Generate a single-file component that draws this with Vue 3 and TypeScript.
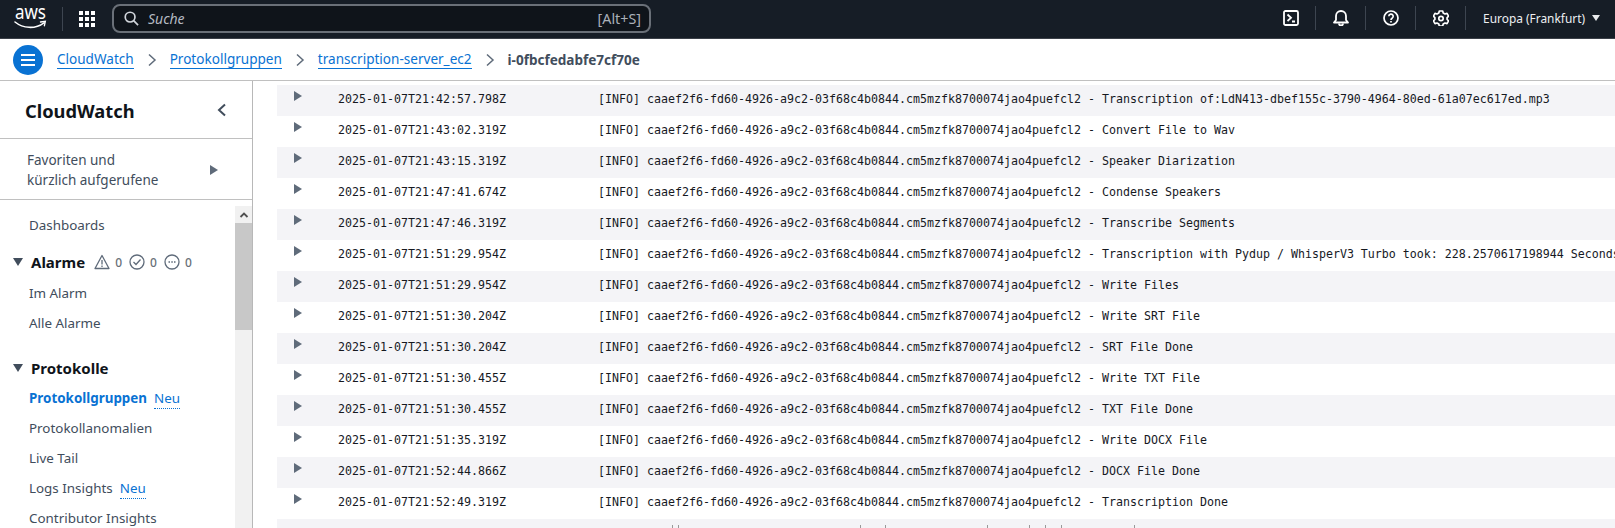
<script setup lang="ts">
const prefix = 'caaef2f6-fd60-4926-a9c2-03f68c4b0844.cm5mzfk8700074jao4puefcl2 - '
const rows: [string, string][] = [
  ['2025-01-07T21:42:57.798Z', 'Transcription of:LdN413-dbef155c-3790-4964-80ed-61a07ec617ed.mp3'],
  ['2025-01-07T21:43:02.319Z', 'Convert File to Wav'],
  ['2025-01-07T21:43:15.319Z', 'Speaker Diarization'],
  ['2025-01-07T21:47:41.674Z', 'Condense Speakers'],
  ['2025-01-07T21:47:46.319Z', 'Transcribe Segments'],
  ['2025-01-07T21:51:29.954Z', 'Transcription with Pydup / WhisperV3 Turbo took: 228.2570617198944 Seconds'],
  ['2025-01-07T21:51:29.954Z', 'Write Files'],
  ['2025-01-07T21:51:30.204Z', 'Write SRT File'],
  ['2025-01-07T21:51:30.204Z', 'SRT File Done'],
  ['2025-01-07T21:51:30.455Z', 'Write TXT File'],
  ['2025-01-07T21:51:30.455Z', 'TXT File Done'],
  ['2025-01-07T21:51:35.319Z', 'Write DOCX File'],
  ['2025-01-07T21:52:44.866Z', 'DOCX File Done'],
  ['2025-01-07T21:52:49.319Z', 'Transcription Done']
]
const ticks = [395, 401, 583, 608, 710, 752, 768, 784, 857]
</script>

<template>
  <div class="page">
    <header class="topbar">
      <svg class="aws" viewBox="0 -12 34 48" width="34" height="48">
        <text x="1" y="12.300" class="awstext" textLength="31" lengthAdjust="spacingAndGlyphs">aws</text>
        <path d="M1 15c8 6.500 20 7.500 29 .8" fill="none" stroke="#fff" stroke-width="1.500" stroke-linecap="round"/>
        <path d="M26.500 15l4.800-.6-.9 4.300" fill="none" stroke="#fff" stroke-width="1.400" stroke-linecap="round"/>
      </svg>
      <span class="vsep first"></span>
      <svg class="grid" width="16" height="16" viewBox="0 0 16 16" fill="#fff">
        <rect v-for="n in 9" :key="n" :x="(n - 1) % 3 * 6" :y="Math.floor((n - 1) / 3) * 6" width="4" height="4" />
      </svg>
      <div class="search">
        <svg width="15" height="15" viewBox="0 0 16 16" fill="none" stroke="#d1d5db" stroke-width="1.800">
          <circle cx="6.500" cy="6.500" r="5.200" /><path d="M10.300 10.300L15 15" />
        </svg>
        <span class="ph">Suche</span>
        <span class="key">[Alt+S]</span>
      </div>
      <div class="tools">
        <svg class="ic" width="16" height="16" viewBox="0 0 16 16" fill="none" stroke="#fff" stroke-width="1.800">
          <rect x="1" y="1" width="14" height="14" rx="1.500"/><path d="M4.500 4.500L8 7.800 4.500 11M9 11.500h3"/>
        </svg>
        <span class="vsep"></span>
        <svg class="ic" width="16" height="16" viewBox="0 0 16 16" fill="none" stroke="#fff" stroke-width="1.800">
          <path d="M1 12.500h14l-2-2.500V6a5 5 0 0 0-10 0v4z" stroke-linejoin="round"/><path d="M6 13.500a2 2 0 0 0 4 0"/>
        </svg>
        <span class="vsep"></span>
        <svg class="ic" width="16" height="16" viewBox="0 0 16 16" fill="none" stroke="#fff" stroke-width="1.700">
          <circle cx="8" cy="8" r="7"/><path d="M5.800 6.300a2.200 2.200 0 1 1 3.300 1.900C8.300 8.700 8 9 8 10M8 11v1.500"/>
        </svg>
        <span class="vsep"></span>
        <svg class="ic" width="16" height="16" viewBox="0 0 16 16" fill="none" stroke="#fff" stroke-width="1.700">
          <path d="M6.300 1h3.400l.5 2 1.800 1 2-.6 1.600 2.800-1.500 1.400v1.800l1.500 1.400-1.600 2.800-2-.6-1.800 1-.5 2H6.300l-.5-2-1.800-1-2 .6L.4 10.800l1.500-1.400V7.600L.4 6.200 2 3.400l2 .6 1.800-1z" stroke-linejoin="round"/>
          <circle cx="8" cy="8.500" r="2.200"/>
        </svg>
        <span class="vsep"></span>
        <span class="region">Europa (Frankfurt)</span>
        <span class="caret"></span>
      </div>
    </header>

    <nav class="crumbs">
      <span class="burger"><i></i><i></i><i></i></span>
      <a class="link">CloudWatch</a>
      <svg class="chev" width="10" height="14" viewBox="0 0 10 14" fill="none" stroke="#5f6b7a" stroke-width="1.500"><path d="M2 1.500L8 7l-6 5.500"/></svg>
      <a class="link">Protokollgruppen</a>
      <svg class="chev" width="10" height="14" viewBox="0 0 10 14" fill="none" stroke="#5f6b7a" stroke-width="1.500"><path d="M2 1.500L8 7l-6 5.500"/></svg>
      <a class="link">transcription-server_ec2</a>
      <svg class="chev" width="10" height="14" viewBox="0 0 10 14" fill="none" stroke="#5f6b7a" stroke-width="1.500"><path d="M2 1.500L8 7l-6 5.500"/></svg>
      <span class="current">i-0fbcfedabfe7cf70e</span>
    </nav>

    <div class="body">
      <aside class="side">
        <div class="side-title">
          <span>CloudWatch</span>
          <svg width="10" height="14" viewBox="0 0 10 14" fill="none" stroke="#414d5c" stroke-width="2"><path d="M8 1.500L2 7l6 5.500"/></svg>
        </div>
        <div class="fav">
          <span>Favoriten und<br />kürzlich aufgerufene</span>
          <span class="tri-r"></span>
        </div>
        <div class="scroll">
          <div class="nav">
            <div class="item top">Dashboards</div>
            <div class="group alarm">
              <span class="tri-d"></span><b>Alarme</b>
              <svg class="st lead" width="16" height="16" viewBox="0 0 16 16" fill="none" stroke="#5f6b7a" stroke-width="1.300"><path d="M8 1.500L15 14.500H1z" stroke-linejoin="round"/><path d="M8 6v4.500M8 11.500v1.500"/></svg><span class="n">0</span>
              <svg class="st" width="16" height="16" viewBox="0 0 16 16" fill="none" stroke="#5f6b7a" stroke-width="1.300"><circle cx="8" cy="8" r="7"/><path d="M4.500 8l2.500 2.500 4.500-5"/></svg><span class="n">0</span>
              <svg class="st" width="16" height="16" viewBox="0 0 16 16" fill="none" stroke="#5f6b7a" stroke-width="1.300"><circle cx="8" cy="8" r="7"/><path d="M4.500 8h1.500M7.300 8h1.500M10 8h1.500"/></svg><span class="n">0</span>
            </div>
            <div class="item">Im Alarm</div>
            <div class="item">Alle Alarme</div>
            <div class="group second"><span class="tri-d"></span><b>Protokolle</b></div>
            <div class="item active"><strong>Protokollgruppen</strong><span class="neu">Neu</span></div>
            <div class="item">Protokollanomalien</div>
            <div class="item">Live Tail</div>
            <div class="item">Logs Insights<span class="neu">Neu</span></div>
            <div class="item">Contributor Insights</div>
          </div>
          <div class="bar">
            <div class="bar-up"><svg width="10" height="6" viewBox="0 0 10 6" fill="none" stroke="#505050" stroke-width="1.800"><path d="M1.500 5L5 1.500 8.500 5"/></svg></div>
            <div class="bar-thumb"></div>
          </div>
        </div>
      </aside>
      <main class="logs">
        <div v-for="(r, i) in rows" :key="i" class="row">
          <span class="tri-r"></span>
          <span class="time">{{ r[0] }}</span>
          <span class="msg">[INFO] {{ prefix }}{{ r[1] }}</span>
        </div>
        <div class="row cut">
          <svg class="ticks" width="1338" height="9" viewBox="0 0 1338 9" fill="#999">
            <rect v-for="t in ticks" :key="t" :x="t" y="6" width="1" height="3" />
          </svg>
        </div>
      </main>
    </div>
  </div>
</template>

<style>
html, body { margin: 0; overflow: hidden; background: #fff; }
</style>

<style scoped>
.page { width: 1615px; height: 528px; overflow: hidden; display: flex; flex-direction: column; font-family: "Noto Sans", sans-serif; color: #414d5c; }
.topbar { height: 38px; flex: none; background: #161d26; border-bottom: 1px solid #3b4048; display: flex; align-items: center; padding-left: 14px; color: #fff; }
.aws { flex: none; margin: -12px 0; }
.awstext { font: 20px "Noto Sans", sans-serif; fill: #fff; }
.vsep { width: 1px; height: 24px; background: #3d4550; flex: none; }
.vsep.first { margin: 0 16px 0 14px; }
.grid { flex: none; }
.search { margin: 0 0 2px 17px; width: 539px; height: 29px; box-sizing: border-box; border: 2px solid #6a7078; border-radius: 8px; background: #0f141a; display: flex; align-items: center; padding: 0 8px 0 10px; font-size: 14px; }
.ph { margin-left: 9px; font-style: italic; color: #b4bac2; }
.key { margin-left: auto; color: #aab0b8; font-size: 14.300px; }
.tools { margin-left: auto; display: flex; align-items: center; padding: 0 15px 2px 0; }
.ic { margin: 0 16px 0 17px; flex: none; }
.region { margin-left: 17px; font-size: 11.900px; color: #eef0f2; }
.caret { margin-left: 7px; width: 0; height: 0; border: 4px solid transparent; border-top: 6px solid #e8eaec; border-bottom: 0; }
.crumbs { height: 42px; flex: none; box-sizing: border-box; border-bottom: 1px solid #c0c0c0; display: flex; align-items: center; padding-left: 13px; font-size: 13.550px; }
.burger { width: 30px; height: 30px; border-radius: 50%; background: #0972d3; display: flex; flex-direction: column; align-items: center; justify-content: center; gap: 3px; margin-right: 14px; }
.burger i { width: 14px; height: 2px; background: #fff; display: block; }
.link { color: #0972d3; border-bottom: 1px solid #0972d3; line-height: 17px; }
.chev { margin: 0 13px; flex: none; }
.current { color: #414d5c; font-weight: 700; }
.body { flex: 1; display: flex; min-height: 0; }
.side { width: 252px; flex: none; box-sizing: content-box; border-right: 1px solid #b8b8b8; display: flex; flex-direction: column; min-height: 0; }
.side-title { height: 58px; flex: none; box-sizing: border-box; border-bottom: 1px solid #c0c0c0; display: flex; align-items: center; justify-content: space-between; padding: 1px 25px 0 25px; font-size: 18.300px; font-weight: 700; color: #0f141a; }
.fav { height: 61px; flex: none; box-sizing: border-box; border-bottom: 1px solid #c0c0c0; display: flex; align-items: center; justify-content: space-between; padding: 1px 34px 0 27px; font-size: 13.500px; line-height: 20px; }
.scroll { flex: 1; min-height: 0; display: flex; position: relative; overflow: hidden; }
.nav { flex: 1; padding-top: 10px; font-size: 13.400px; }
.item { height: 30px; line-height: 30px; padding-left: 29px; white-space: nowrap; }
.item.top { margin-bottom: 7px; }
.group { height: 30px; display: flex; align-items: center; padding-left: 13px; color: #0f141a; font-size: 15px; }
.group.alarm { margin-bottom: 1px; }
.group b { margin-left: 8px; font-weight: 700; }
.group.second { margin-top: 15px; }
.tri-d { width: 0; height: 0; border: 5px solid transparent; border-top: 8px solid #414d5c; border-bottom: 0; }
.st { margin-left: 7px; flex: none; }
.st.lead { margin-left: 9px; }
.n { margin-left: 5px; font-size: 12px; color: #687078; font-weight: 500; }
.active { color: #0972d3; }
.active strong { font-weight: 700; }
.neu { margin-left: 7px; color: #0972d3; border-bottom: 1px dotted #0972d3; padding-bottom: 1px; }
.bar { position: absolute; right: 0; top: 6px; bottom: 0; width: 17px; background: #f1f1f1; }
.bar-up { height: 17px; display: flex; align-items: center; justify-content: center; }
.bar-thumb { height: 107px; background: #c8c8c8; }
.logs { flex: 1; min-width: 0; padding: 4px 0 0 24px; overflow: hidden; }
.row { height: 31px; display: flex; white-space: nowrap; font-family: "DejaVu Sans Mono", monospace; font-size: 11.630px; color: #16191f; }
.row:nth-child(odd) { background: #f4f4f7; }
.row.cut { display: block; }
.ticks { display: block; }
.tri-r { width: 0; height: 0; border: 5.500px solid transparent; border-left: 8px solid #5f6b7a; border-right: 0; flex: none; }
.row .tri-r { margin: 6px 0 0 17px; }
.time { margin-left: 36px; width: 260px; flex: none; line-height: 29px; }
.msg { line-height: 29px; }
</style>
